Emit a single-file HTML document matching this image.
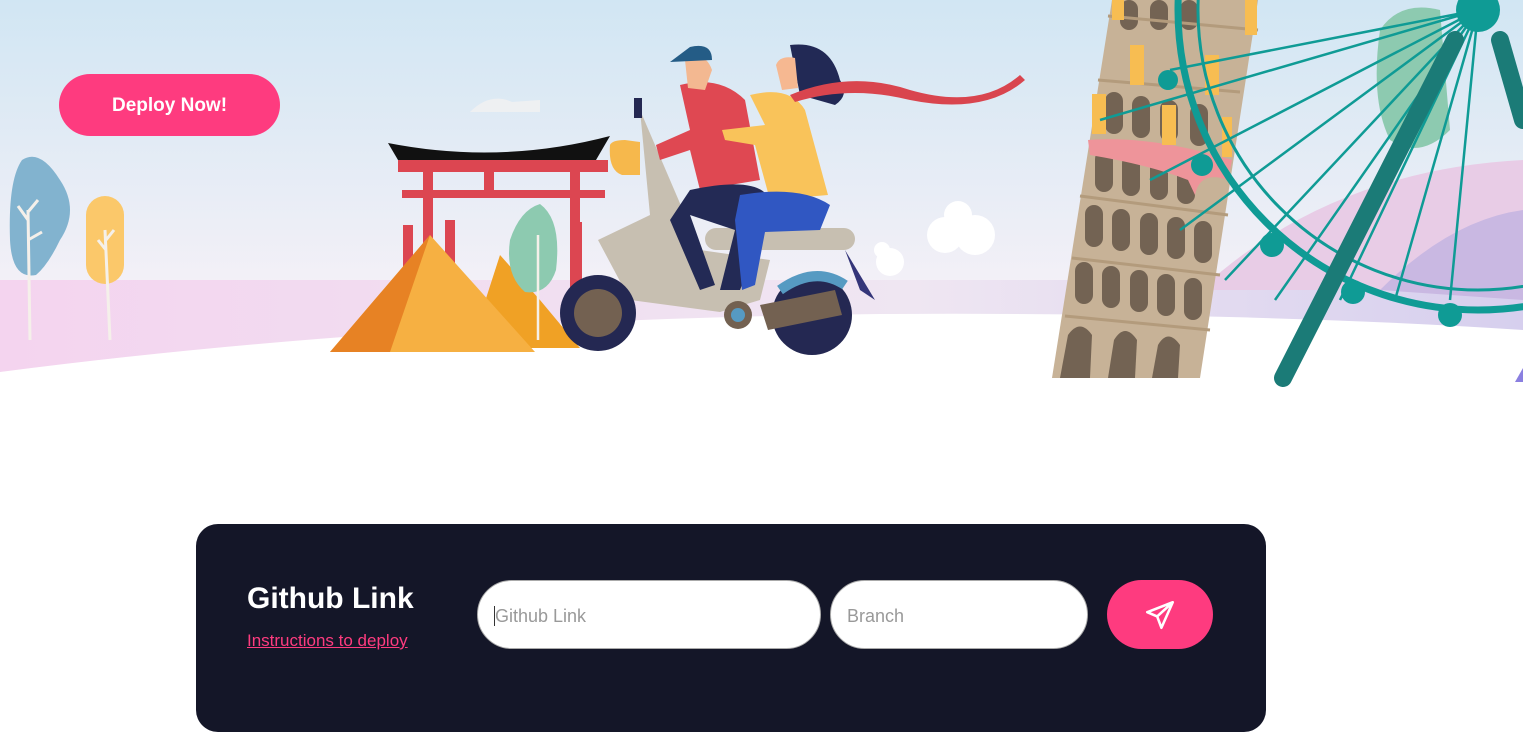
<!DOCTYPE html>
<html><head><meta charset="utf-8"><style>
html,body{margin:0;padding:0;width:1523px;height:741px;overflow:hidden;background:#fff;font-family:"Liberation Sans",sans-serif}
#hero{position:absolute;left:0;top:0}
.btn{position:absolute;left:59px;top:74px;width:221px;height:62px;border-radius:31px;background:#fe3b7f;color:#fff;font-weight:bold;font-size:19px;display:flex;align-items:center;justify-content:center;padding-top:2px;box-sizing:border-box}
.card{position:absolute;left:196px;top:524px;width:1070px;height:208px;border-radius:22px;background:#141628}
.card h2{position:absolute;left:51px;top:58px;margin:0;color:#fff;font-size:30px;font-weight:bold}
.card a{position:absolute;left:51px;top:107px;color:#fe3b7f;font-size:17px;text-decoration:underline}
.in{position:absolute;top:56px;height:69px;border:1px solid #aaa;border-radius:35px;background:#fff;color:#999;font-size:18px;line-height:71px;box-sizing:border-box}
.send{position:absolute;left:911px;top:56px;width:106px;height:69px;border-radius:35px;background:#fe3b7f;display:flex;align-items:center;justify-content:center}
</style></head><body>
<svg id="hero" width="1523" height="400" viewBox="0 0 1523 400">
<defs>
<linearGradient id="sky" x1="0" y1="0" x2="0" y2="1"><stop offset="0" stop-color="#d1e6f3"/><stop offset="1" stop-color="#f3f0f7"/></linearGradient>
<linearGradient id="band" x1="0" y1="0" x2="1" y2="0"><stop offset="0" stop-color="#f4d4ef"/><stop offset="0.6" stop-color="#efe6f2"/><stop offset="1" stop-color="#d6cfee"/></linearGradient>
</defs>
<rect width="1523" height="282" fill="url(#sky)"/>
<rect y="280" width="1523" height="120" fill="url(#band)"/>
<path d="M1200 290 Q1330 170 1523 160 L1523 290Z" fill="#e8cce6"/>
<path d="M1380 290 Q1450 220 1523 210 L1523 300Z" fill="#c9b8e2"/>
<path d="M0 372 Q400 320 880 314 Q1250 312 1523 330 L1523 400 L0 400Z" fill="#fff"/>
<path d="M22 160 Q40 148 60 180 Q80 210 60 240 Q48 265 36 275 Q12 280 10 240 Q8 180 22 160Z" fill="#82b3cf"/>
<path d="M30 340 L28 210 M28 240 L42 232 M28 220 L18 206 M28 212 L38 200" stroke="#f5f0ea" stroke-width="3" fill="none"/>
<rect x="86" y="196" width="38" height="88" rx="19" fill="#fbc86a"/>
<path d="M110 340 L105 230 M106 250 L98 240 M106 240 L114 230" stroke="#f5f0ea" stroke-width="3" fill="none"/>
<path d="M470 112 Q490 92 512 102 L540 100 L540 112Z" fill="#eef0f2"/>
<path d="M388 143 Q500 165 610 136 L596 160 Q500 170 398 160Z" fill="#111"/>
<rect x="398" y="160" width="210" height="12" fill="#dc4651"/>
<rect x="402" y="190" width="203" height="8" fill="#dc4651"/>
<rect x="423" y="172" width="10" height="110" fill="#dc4651"/>
<rect x="570" y="172" width="10" height="130" fill="#dc4651"/>
<rect x="484" y="172" width="10" height="20" fill="#dc4651"/>
<rect x="403" y="225" width="10" height="60" fill="#dc4651"/><rect x="445" y="220" width="10" height="60" fill="#dc4651"/><rect x="572" y="222" width="10" height="70" fill="#dc4651"/>
<path d="M500 255 L540 300 L580 348 L470 348Z" fill="#f0a125"/>
<path d="M430 235 L330 352 L535 352Z" fill="#f6b042"/>
<path d="M430 235 L330 352 L390 352Z" fill="#e78224"/>
<path d="M540 204 Q520 210 510 240 Q505 275 525 292 Q548 295 556 270 Q562 220 540 204Z" fill="#8dcab0"/>
<path d="M538 340 L538 235" stroke="#f5f0ea" stroke-width="2.5"/>
<path d="M640 110 L650 215 L598 240 L630 300 L720 312 L760 300 L770 260 L700 250 L640 110Z" fill="#c7bfb1"/>
<rect x="705" y="228" width="150" height="22" rx="11" fill="#c7bfb1"/>
<circle cx="598" cy="313" r="38" fill="#242852"/><circle cx="598" cy="313" r="24" fill="#736151"/>
<circle cx="812" cy="315" r="40" fill="#242852"/>
<path d="M780 290 Q815 265 845 285" stroke="#569ac2" stroke-width="10" fill="none"/>
<path d="M760 305 L835 290 L842 315 L768 330Z" fill="#736151"/>
<circle cx="738" cy="315" r="14" fill="#736151"/><circle cx="738" cy="315" r="7" fill="#569ac2"/>
<path d="M610 145 Q612 140 625 140 L640 142 L640 175 L622 175 Q608 170 610 145Z" fill="#f6b84c"/>
<rect x="634" y="98" width="8" height="20" fill="#242852"/>
<path d="M845 250 L875 300 L860 290Z" fill="#343579"/>
<path d="M680 85 Q720 75 745 100 L760 180 L700 190 L690 150 L660 160 L656 145 L690 130Z" fill="#df4852"/>
<path d="M690 190 Q760 175 770 200 L760 240 L740 290 L720 290 L735 230 L690 215 L715 285 L700 290 L670 220Z" fill="#232a55"/>
<path d="M685 60 Q705 50 712 70 L705 90 L688 88Z" fill="#f3b891"/>
<path d="M670 62 L690 47 Q712 42 712 60Z" fill="#245c86"/>
<path d="M750 95 Q790 85 805 110 L828 195 L770 200 L755 145 L725 140 L722 130 L765 125Z" fill="#f9c35a"/>
<path d="M740 195 Q800 185 830 205 L820 230 L765 232 L755 285 L742 290 L735 220Z" fill="#3057c2"/>
<path d="M790 45 Q830 40 840 80 Q850 95 835 105 L800 95 Z" fill="#222955"/>
<path d="M776 65 Q780 55 795 58 L798 88 L782 90Z" fill="#f6b891"/>
<path d="M790 95 Q850 70 910 90 Q980 110 1020 75 L1025 80 Q985 115 910 100 Q850 85 795 102Z" fill="#d9454e"/>
<circle cx="945" cy="235" r="18" fill="#fff"/><circle cx="975" cy="235" r="20" fill="#fff"/><circle cx="958" cy="215" r="14" fill="#fff"/>
<circle cx="890" cy="262" r="14" fill="#fff"/><circle cx="882" cy="250" r="8" fill="#fff"/>
<path d="M1112 0 L1258 0 L1200 378 L1052 378Z" fill="#c7b297"/>
<g fill="#736353">
<path d="M1060 378 L1068 335 Q1080 318 1092 335 L1090 378Z"/><path d="M1108 378 L1114 340 Q1125 322 1137 340 L1135 378Z"/><path d="M1152 378 L1158 345 Q1168 328 1180 345 L1178 378Z"/>
<rect x="1075" y="262" width="18" height="42" rx="9"/><rect x="1102" y="266" width="18" height="42" rx="9"/><rect x="1130" y="270" width="18" height="42" rx="9"/><rect x="1157" y="274" width="18" height="42" rx="9"/><rect x="1184" y="278" width="18" height="42" rx="9"/>
<rect x="1085" y="205" width="18" height="42" rx="9"/><rect x="1112" y="209" width="18" height="42" rx="9"/><rect x="1140" y="213" width="18" height="42" rx="9"/><rect x="1167" y="217" width="18" height="42" rx="9"/><rect x="1194" y="221" width="18" height="42" rx="9"/>
<rect x="1095" y="150" width="18" height="42" rx="9"/><rect x="1122" y="154" width="18" height="42" rx="9"/><rect x="1150" y="158" width="18" height="42" rx="9"/><rect x="1177" y="162" width="18" height="42" rx="9"/>
<rect x="1105" y="92" width="18" height="42" rx="9"/><rect x="1132" y="96" width="18" height="42" rx="9"/><rect x="1160" y="100" width="18" height="42" rx="9"/><rect x="1190" y="104" width="18" height="42" rx="9"/>
<rect x="1120" y="0" width="18" height="30" rx="9"/><rect x="1150" y="0" width="18" height="30" rx="9"/><rect x="1180" y="0" width="18" height="30" rx="9"/>
</g>
<g stroke="#b39b7c" stroke-width="3"><path d="M1065 316 L1210 330"/><path d="M1072 258 L1220 275"/><path d="M1080 196 L1228 215"/><path d="M1098 80 L1240 92"/><path d="M1108 16 L1258 30"/></g>
<path d="M1088 140 Q1150 135 1232 160 L1228 180 Q1200 170 1195 195 L1188 180 Q1150 165 1090 155Z" fill="#ee949a"/>
<g fill="#f7bd52"><rect x="1092" y="94" width="14" height="40"/><rect x="1130" y="45" width="14" height="40"/><rect x="1162" y="105" width="14" height="40"/><rect x="1205" y="55" width="14" height="40"/><rect x="1222" y="117" width="10" height="40"/><rect x="1112" y="0" width="12" height="20"/><rect x="1245" y="0" width="12" height="35"/></g>
<path d="M1380 30 Q1400 0 1440 10 L1450 130 Q1420 160 1390 140 Q1370 100 1380 30Z" fill="#8dcab0"/>
<g stroke="#0f9b95" stroke-width="2.5" fill="none">
<path d="M1478 10 L1100 120 M1478 10 L1150 180 M1478 10 L1180 230 M1478 10 L1225 280 M1478 10 L1275 300 M1478 10 L1340 300 M1478 10 L1395 300 M1478 10 L1450 300 M1478 10 L1170 70"/>
</g>
<circle cx="1478" cy="10" r="300" stroke="#0f9b95" stroke-width="7" fill="none"/>
<circle cx="1478" cy="10" r="280" stroke="#0f9b95" stroke-width="3" fill="none"/>
<g fill="#0f9b95"><circle cx="1168" cy="80" r="10"/><circle cx="1202" cy="165" r="11"/><circle cx="1272" cy="245" r="12"/><circle cx="1353" cy="292" r="12"/><circle cx="1450" cy="315" r="12"/><circle cx="1478" cy="10" r="22"/></g>
<path d="M1283 378 L1455 40 M1500 40 L1523 120" stroke="#1b7b77" stroke-width="18" stroke-linecap="round"/>
<path d="M1515 382 L1523 368 L1523 382Z" fill="#8a7fe0"/>
</svg>
<div class="btn">Deploy Now!</div>
<div class="card">
<h2>Github Link</h2>
<a>Instructions to deploy</a>
<div class="in" style="left:281px;width:344px;padding-left:16px;"><span style="border-left:1.5px solid #333;padding-left:0">Github Link</span></div>
<div class="in" style="left:634px;width:258px;padding-left:16px;">Branch</div>
<div class="send"><svg width="34" height="34" viewBox="0 0 24 24" fill="none" stroke="#fff" stroke-width="1.8" stroke-linejoin="round"><path d="M21 3 L3 10 L10 13 L13 21 Z M21 3 L10 13"/></svg></div>
</div>
</body></html>
